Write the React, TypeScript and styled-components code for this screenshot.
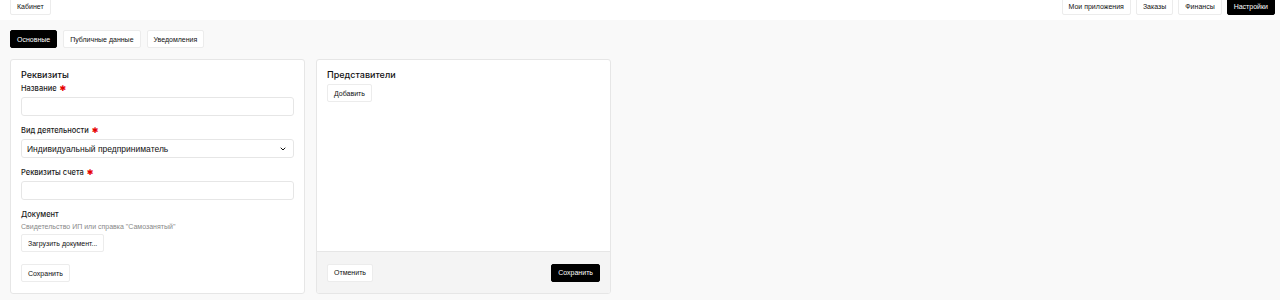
import styled, { createGlobalStyle } from "styled-components";

const GlobalStyle = createGlobalStyle`
  html, body {
    margin: 0;
    padding: 0;
    background: #f9f9f9;
    font-family: "Liberation Sans", Arial, sans-serif;
    color: #111;
  }
  * {
    box-sizing: border-box;
  }
`;

const Header = styled.header`
  height: 20px;
  background: #ffffff;
  display: flex;
  align-items: flex-end;
  justify-content: space-between;
  padding: 0 5px 5px 10px;
  overflow: hidden;
`;

const Nav = styled.nav`
  display: flex;
  gap: 5px;
`;

const Button = styled.button<{ $dark?: boolean }>`
  height: 18px;
  padding: 0 6px;
  font-family: inherit;
  font-size: 7px;
  line-height: 1;
  border-radius: 2px;
  border: 1px solid ${(p) => (p.$dark ? "#000" : "#ececec")};
  background: ${(p) => (p.$dark ? "#000" : "#fff")};
  color: ${(p) => (p.$dark ? "#fff" : "#111")};
  cursor: pointer;
  white-space: nowrap;
`;

const Main = styled.main`
  padding: 10px 10px 0;
`;

const Tabs = styled.div`
  display: flex;
  gap: 6px;
  margin-bottom: 11px;
`;

const Grid = styled.div`
  display: grid;
  grid-template-columns: 295px 295px;
  gap: 11px;
`;

const Card = styled.section`
  height: 235px;
  background: #fff;
  border: 1px solid #e6e6e6;
  border-radius: 3px;
  display: flex;
  flex-direction: column;
  overflow: hidden;
`;

const CardBody = styled.div`
  flex: 1;
  padding: 9px 10px 11px;
  display: flex;
  flex-direction: column;
  align-items: flex-start;
`;

const CardTitle = styled.h2`
  margin: 0 0 3px;
  font-family: Inter, "Liberation Sans", sans-serif;
  font-size: 9px;
  font-weight: 500;
  line-height: 12px;
`;

const Field = styled.div`
  width: 100%;
  margin-bottom: 10px;
`;

const Label = styled.label`
  display: flex;
  align-items: center;
  gap: 3px;
  font-family: Inter, "Liberation Sans", sans-serif;
  font-size: 7.5px;
  font-weight: 500;
  line-height: 10px;
  margin-bottom: 3px;
  color: #222;
`;

const Star = styled.span`
  color: #e60000;
  font-family: "DejaVu Sans", sans-serif;
  font-size: 8px;
  line-height: 8px;
`;

const Input = styled.div`
  width: 100%;
  height: 19px;
  border: 1px solid #e6e6e6;
  border-radius: 3px;
  background: #fff;
`;

const Select = styled(Input)`
  display: flex;
  align-items: center;
  justify-content: space-between;
  padding: 0 6px 0 5px;
  font-size: 8.5px;
`;

const Hint = styled.div`
  font-size: 7px;
  color: #888;
  line-height: 10px;
  margin: -1px 0 2px;
`;

const Spacer = styled.div`
  height: 12px;
`;

const Footer = styled.footer`
  height: 42px;
  background: #f4f4f4;
  border-top: 1px solid #e6e6e6;
  display: flex;
  align-items: center;
  justify-content: space-between;
  padding: 0 10px;
`;

function Chevron() {
  return (
    <svg width="8" height="8" viewBox="0 0 24 24" fill="none" stroke="#111" strokeWidth="3" strokeLinecap="round" strokeLinejoin="round">
      <path d="M6 9l6 6 6-6" />
    </svg>
  );
}

function App() {
  return (
    <>
      <GlobalStyle />
      <Header>
        <Button>Кабинет</Button>
        <Nav>
          <Button>Мои приложения</Button>
          <Button>Заказы</Button>
          <Button>Финансы</Button>
          <Button $dark>Настройки</Button>
        </Nav>
      </Header>
      <Main>
        <Tabs>
          <Button $dark>Основные</Button>
          <Button>Публичные данные</Button>
          <Button>Уведомления</Button>
        </Tabs>
        <Grid>
          <Card>
            <CardBody>
              <CardTitle>Реквизиты</CardTitle>
              <Field>
                <Label>
                  Название <Star>✱</Star>
                </Label>
                <Input />
              </Field>
              <Field>
                <Label>
                  Вид деятельности <Star>✱</Star>
                </Label>
                <Select>
                  Индивидуальный предприниматель
                  <Chevron />
                </Select>
              </Field>
              <Field>
                <Label>
                  Реквизиты счета <Star>✱</Star>
                </Label>
                <Input />
              </Field>
              <Label>Документ</Label>
              <Hint>Свидетельство ИП или справка "Самозанятый"</Hint>
              <Button>Загрузить документ...</Button>
              <Spacer />
              <Button>Сохранить</Button>
            </CardBody>
          </Card>
          <Card>
            <CardBody>
              <CardTitle>Представители</CardTitle>
              <Button>Добавить</Button>
            </CardBody>
            <Footer>
              <Button>Отменить</Button>
              <Button $dark>Сохранить</Button>
            </Footer>
          </Card>
        </Grid>
      </Main>
    </>
  );
}

export default App;
